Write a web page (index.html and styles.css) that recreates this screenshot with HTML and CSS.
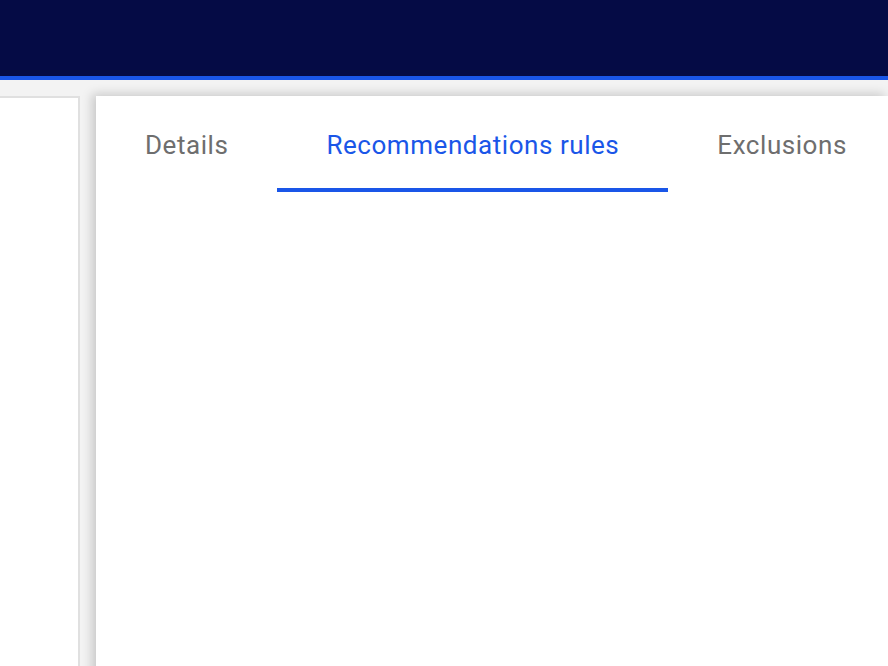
FILE: index.html
```html
<!DOCTYPE html>
<html lang="en">
  <head>
    <meta charset="UTF-8" />
    <title>Recommendations rules</title>
    <link rel="stylesheet" href="styles.css">
  </head>
  <body>
    <header class="topbar"></header>
    <div class="layout">
      <aside class="sidebar"></aside>
      <main class="panel">
        <nav class="tabs">
          <div class="tab">Details</div>
          <div class="tab active">Recommendations rules</div>
          <div class="tab">Exclusions</div>
        </nav>
      </main>
    </div>
  </body>
</html>
```
FILE: styles.css
```css
* {
  box-sizing: border-box;
}

body {
  margin: 0;
  height: 666px;
  overflow: hidden;
  background-color: #f3f3f3;
  font-family: Roboto, "Noto Sans", sans-serif;
}

.topbar {
  height: 80px;
  background-color: #050b45;
  border-bottom: 4px solid #1a56e8;
}

.layout {
  display: flex;
  align-items: flex-start;
  gap: 16px;
  padding-top: 16px;
}

.sidebar {
  flex-shrink: 0;
  width: 80px;
  height: 600px;
  background-color: #fff;
  border-top: 2px solid #e0e0e0;
  border-right: 2px solid #e0e0e0;
}

.panel {
  flex-grow: 1;
  min-width: 0;
  height: 600px;
  background-color: #fff;
  box-shadow: -4px -2px 10px rgba(0, 0, 0, 0.18);
}

.tabs {
  display: flex;
  white-space: nowrap;
}

.tab {
  padding: 34px 49px 0;
  height: 96px;
  font-size: 26px;
  letter-spacing: 0.55px;
  color: #6e6e6e;
  border-bottom: 4px solid transparent;
}

.tab.active {
  color: #1a56e8;
  border-bottom-color: #1a56e8;
}
```
